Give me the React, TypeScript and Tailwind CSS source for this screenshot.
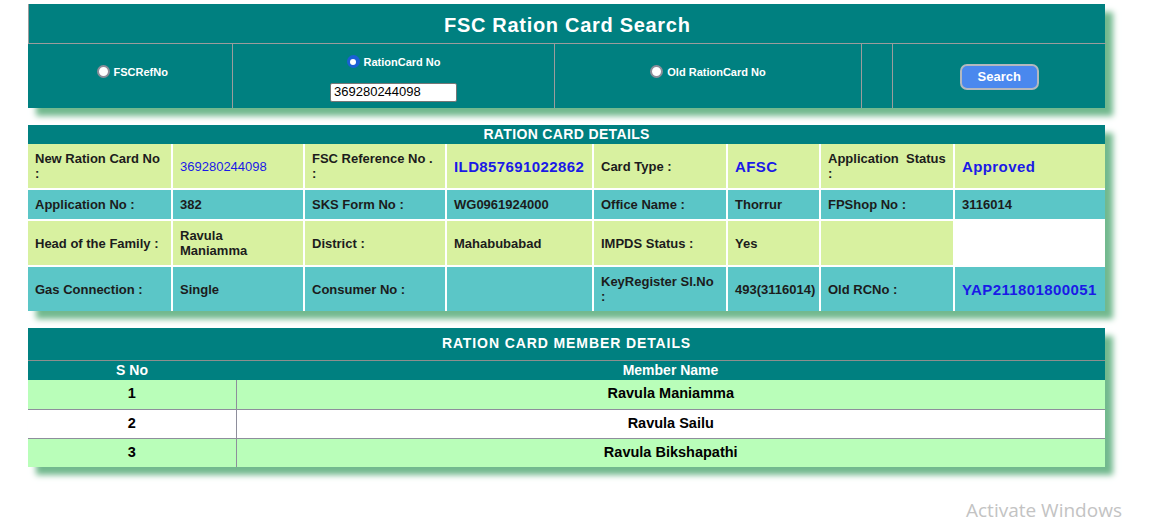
import React from "react";

const font = { fontFamily: '"Liberation Sans", Arial, sans-serif' };

function Radio({ checked, label }: { checked?: boolean; label: string }) {
  return (
    <div className="flex items-center justify-center gap-[4px]">
      {checked ? (
        <span className="w-[13px] h-[13px] rounded-full bg-[#1a5fd4] flex items-center justify-center">
          <span className="w-[6px] h-[6px] rounded-full bg-white" />
        </span>
      ) : (
        <span className="w-[13px] h-[13px] rounded-full bg-white border-2 border-[#8d8d99]" />
      )}
      <span className="text-[11px] font-bold text-white leading-[14px]">{label}</span>
    </div>
  );
}

type Cell = { text: React.ReactNode; kind?: "label" | "value" | "link" | "linkBold" | "blank" };

const detailRows: { bg: string; h: string; cells: Cell[] }[] = [
  {
    bg: "bg-[#d8f1a0]",
    h: "h-[45px]",
    cells: [
      { text: <>New Ration Card No<br />:</>, kind: "label" },
      { text: "369280244098", kind: "link" },
      { text: <>FSC Reference No .<br />:</>, kind: "label" },
      { text: "ILD857691022862", kind: "linkBold" },
      { text: "Card Type :", kind: "label" },
      { text: "AFSC", kind: "linkBold" },
      { text: <>Application&nbsp; Status<br />:</>, kind: "label" },
      { text: "Approved", kind: "linkBold" },
    ],
  },
  {
    bg: "bg-[#5bc6c7]",
    h: "h-[31px]",
    cells: [
      { text: "Application No :", kind: "label" },
      { text: "382", kind: "value" },
      { text: "SKS Form No :", kind: "label" },
      { text: "WG0961924000", kind: "value" },
      { text: "Office Name :", kind: "label" },
      { text: "Thorrur", kind: "value" },
      { text: "FPShop No :", kind: "label" },
      { text: "3116014", kind: "value" },
    ],
  },
  {
    bg: "bg-[#d8f1a0]",
    h: "h-[46px]",
    cells: [
      { text: "Head of the Family :", kind: "label" },
      { text: <>Ravula<br />Maniamma</>, kind: "value" },
      { text: "District :", kind: "label" },
      { text: "Mahabubabad", kind: "value" },
      { text: "IMPDS Status :", kind: "label" },
      { text: "Yes", kind: "value" },
      { text: "", kind: "label" },
      { text: "", kind: "blank" },
    ],
  },
  {
    bg: "bg-[#5bc6c7]",
    h: "h-[45px]",
    cells: [
      { text: "Gas Connection :", kind: "label" },
      { text: "Single", kind: "value" },
      { text: "Consumer No :", kind: "label" },
      { text: "", kind: "value" },
      { text: <>KeyRegister Sl.No<br />:</>, kind: "label" },
      { text: "493(3116014)", kind: "value" },
      { text: "Old RCNo :", kind: "label" },
      { text: "YAP211801800051", kind: "linkBold" },
    ],
  },
];

const detailWidths = ["w-[144px]", "w-[132px]", "w-[142px]", "w-[147px]", "w-[134px]", "w-[93px]", "w-[134px]", "w-[151px]"];

const members = ["Ravula Maniamma", "Ravula Sailu", "Ravula Bikshapathi"];

export default function App() {
  return (
    <div className="relative min-h-[523px] bg-white pt-[4px] pl-[28px]" style={font}>
      {/* Search panel */}
      <div className="w-[1077px] bg-[#008080] shadow-[8px_8px_6px_#72b98e]">
        <table className="w-full table-fixed border-collapse">
          <colgroup>
            <col className="w-[204px]" />
            <col className="w-[322px]" />
            <col className="w-[307px]" />
            <col className="w-[31px]" />
            <col className="w-[213px]" />
          </colgroup>
          <tbody>
            <tr className="h-[39px]">
              <td colSpan={5} className="border-l border-b border-[#9c9c9c] text-center pt-[3px]">
                <span className="text-[20px] font-bold text-white tracking-[0.7px]">FSC Ration Card Search</span>
              </td>
            </tr>
            <tr className="h-[65px]">
              <td className="border-r border-[#9c9c9c] align-top pt-[21px] pl-[4px]">
                <Radio label="FSCRefNo" />
              </td>
              <td className="border-r border-[#9c9c9c] align-top pt-[11px]">
                <div className="flex flex-col items-center">
                  <Radio checked label="RationCard No" />
                  <input
                    readOnly
                    value="369280244098"
                    className="mt-[14px] w-[127px] h-[19px] bg-white border border-[#767676] rounded-[2px] px-[3px] text-[13px] text-black outline-none"
                    style={font}
                  />
                </div>
              </td>
              <td className="border-r border-[#9c9c9c] align-top pt-[21px]">
                <Radio label="Old RationCard No" />
              </td>
              <td className="border-r border-[#9c9c9c]" />
              <td className="align-top pt-[20px]">
                <div className="flex justify-center">
                  <button className="w-[79px] h-[26px] rounded-[7px] bg-[#4a88ee] border-2 border-[#b4b8be] text-white text-[13px] font-bold">
                    Search
                  </button>
                </div>
              </td>
            </tr>
          </tbody>
        </table>
      </div>

      {/* Ration card details */}
      <div className="mt-[17px] w-[1077px] shadow-[8px_8px_6px_#72b98e]">
        <table className="w-full table-fixed border-collapse">
          <colgroup>
            {detailWidths.map((w, i) => (
              <col key={i} className={w} />
            ))}
          </colgroup>
          <tbody>
            <tr className="h-[19px] bg-[#008080]">
              <td colSpan={8} className="text-center text-[14px] font-bold text-white tracking-[0.35px] leading-[19px]">
                RATION CARD DETAILS
              </td>
            </tr>
            {detailRows.map((row, r) => (
              <tr key={r} className={`${row.h} ${row.bg}`}>
                {row.cells.map((c, i) => {
                  let cls = "text-[13px] font-bold text-[#1c1c1c]";
                  if (c.kind === "link") cls = "text-[13px] text-[#1a1ae6]";
                  if (c.kind === "linkBold") cls = "text-[15px] font-bold text-[#1a1ae6] tracking-[0.4px]";
                  const edges = `${i === 0 ? "border-l-0" : ""} ${i === 7 ? "border-r-0" : ""} ${r === 0 ? "border-t-0" : ""} ${r === 3 ? "border-b-0" : ""}`;
                  return (
                    <td
                      key={i}
                      className={`border-2 border-white px-[7px] align-middle leading-[15px] ${edges} ${cls} ${c.kind === "blank" ? "bg-white" : ""}`}
                    >
                      {c.text}
                    </td>
                  );
                })}
              </tr>
            ))}
          </tbody>
        </table>
      </div>

      {/* Member details */}
      <div className="mt-[17px] w-[1077px] shadow-[8px_8px_6px_#72b98e]">
        <table className="w-full table-fixed border-collapse">
          <colgroup>
            <col className="w-[208px]" />
            <col />
          </colgroup>
          <tbody>
            <tr className="h-[32px] bg-[#008080]">
              <td colSpan={2} className="border-b border-[#8e8e8e] text-center text-[14px] font-bold text-white tracking-[0.9px]">
                RATION CARD MEMBER DETAILS
              </td>
            </tr>
            <tr className="h-[20px] bg-[#008080] text-white text-[14px] font-bold leading-[18px]">
              <td className="text-center">S No</td>
              <td className="text-center">Member Name</td>
            </tr>
            {members.map((m, i) => (
              <tr key={i} className={`h-[29px] ${i % 2 === 0 ? "bg-[#b9feb9]" : "bg-white"} text-[14.5px] font-bold text-black`}>
                <td className={`text-center border-r border-[#8e8e9c] ${i > 0 ? "border-t" : ""}`}>{i + 1}</td>
                <td className={`text-center border-[#8e8e9c] ${i > 0 ? "border-t" : ""}`}>{m}</td>
              </tr>
            ))}
          </tbody>
        </table>
      </div>

      <div
        className="absolute left-[966px] top-[496px] text-[19px] text-[#c3c3c3]"
        style={{ fontFamily: '"Open Sans", "Noto Sans", sans-serif' }}
      >
        Activate Windows
      </div>
    </div>
  );
}
